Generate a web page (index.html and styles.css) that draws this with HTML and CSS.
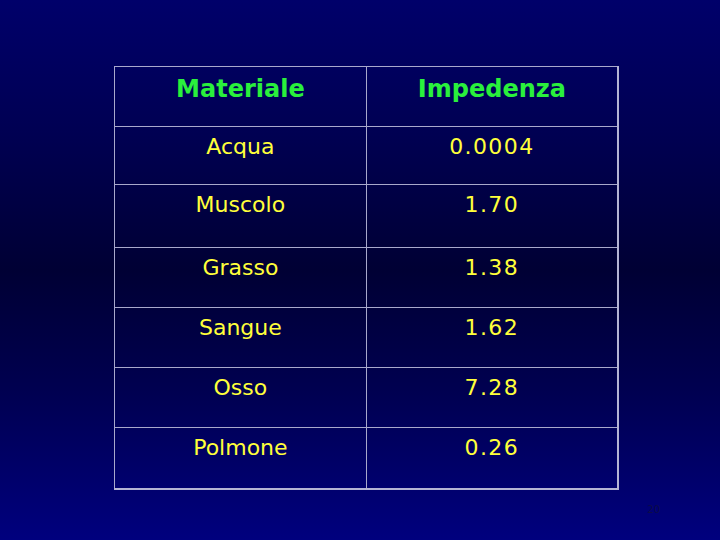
FILE: index.html
```html
<!DOCTYPE html>
<html lang="it">
<head>
<meta charset="utf-8">
<title>Impedenza</title>
<link rel="stylesheet" href="styles.css">
</head>
<body>
<div class="slide">
  <table class="data">
    <thead>
      <tr class="r-head"><th>Materiale</th><th>Impedenza</th></tr>
    </thead>
    <tbody>
      <tr class="r1"><td>Acqua</td><td class="num">0.0004</td></tr>
      <tr class="r2"><td>Muscolo</td><td class="num">1.70</td></tr>
      <tr class="r3"><td>Grasso</td><td class="num">1.38</td></tr>
      <tr class="r4"><td>Sangue</td><td class="num">1.62</td></tr>
      <tr class="r5"><td>Osso</td><td class="num">7.28</td></tr>
      <tr class="r6"><td>Polmone</td><td class="num">0.26</td></tr>
    </tbody>
  </table>
  <div class="footer"><span class="pagenum">20</span></div>
</div>
</body>
</html>
```

FILE: styles.css
```css
html, body {
  margin: 0;
  padding: 0;
}
body {
  width: 720px;
  height: 540px;
  overflow: hidden;
  font-family: "DejaVu Sans", "Liberation Sans", sans-serif;
}
.slide {
  width: 720px;
  height: 540px;
  box-sizing: border-box;
  padding: 66px 0 0 114px;
  background: linear-gradient(to bottom, #00006a 0%, #000052 25%, #000034 50%, #000050 72%, #00007e 100%);
  display: flex;
  flex-direction: column;
}
.data {
  border-collapse: collapse;
  width: 505px;
  table-layout: fixed;
  border-right: 2px solid #b4b4d4;
  border-bottom: 2px solid #b4b4d4;
}
.data th,
.data td {
  border: 1px solid #a8a8cc;
  text-align: center;
  vertical-align: top;
  padding: 0;
  box-sizing: border-box;
}
.data th {
  color: #2af03c;
  font-weight: bold;
  font-size: 24px;
  line-height: 28px;
  padding-top: 8px;
}
.data td {
  color: #ffff3a;
  font-size: 22px;
  line-height: 26px;
  padding-top: 7px;
}
.data td.num {
  letter-spacing: 1.4px;
}
.r-head { height: 60px; }
.r1 { height: 58px; }
.r2 { height: 63px; }
.r3 { height: 60px; }
.r4 { height: 60px; }
.r5 { height: 60px; }
.r6 { height: 61px; }
.footer {
  margin-top: 8px;
  width: 546px;
  text-align: right;
}
.pagenum {
  font-size: 10px;
  color: #0c0c48;
}
```
